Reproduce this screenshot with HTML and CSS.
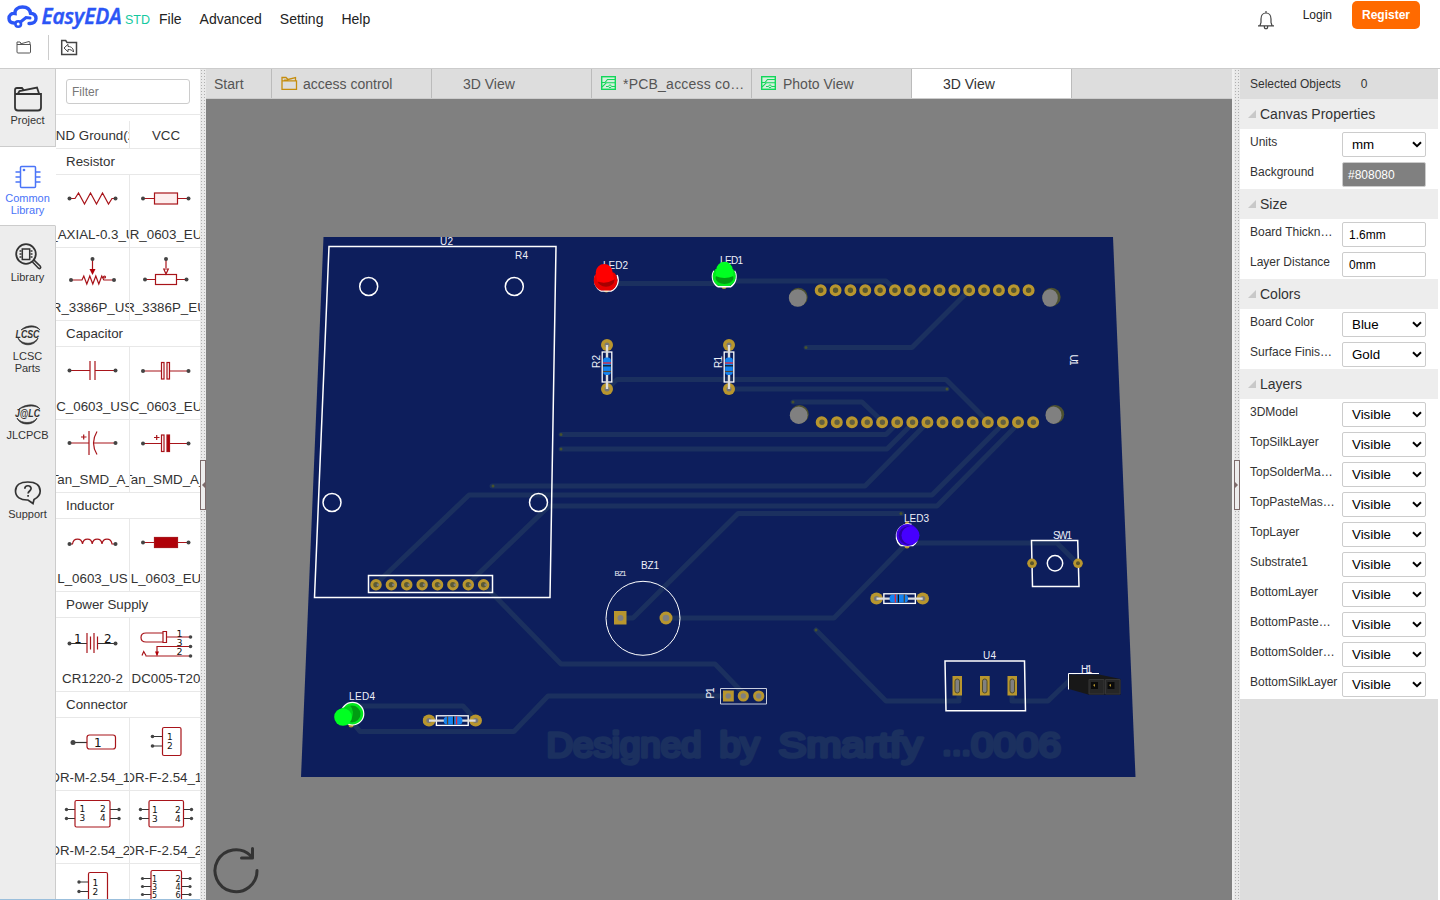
FILE: index.html
```html
<!DOCTYPE html>
<html lang="en">
<head>
<meta charset="utf-8">
<title>EasyEDA - 3D View</title>
<link rel="stylesheet" href="styles.css">
</head>
<body>
<svg class="defs" width="0" height="0" aria-hidden="true">
  <symbol id="chev" viewBox="0 0 10 7"><path d="M1 1.200l4 4 4-4" fill="none" stroke="#000" stroke-width="2"/></symbol>
  <symbol id="pcb" viewBox="0 0 15 14"><rect x=".7" y=".7" width="13.600" height="12.600" fill="#d3f0dc" stroke="#12d65a" stroke-width="1.400"/><path d="M1 6.500h3l2.500-3H14M1 11l4.500-4.300H14M5 10.500h2.500M10.500 10.500H14" fill="none" stroke="#12d65a" stroke-width="1.100"/><circle cx="9" cy="10.300" r="1.300" fill="#fff" stroke="#12d65a"/></symbol>
  <symbol id="resv" viewBox="-8 -28 16 56">
    <circle cy="-22" r="6" fill="#b8962e"/><circle cy="22" r="6" fill="#b8962e"/><circle cy="-22" r="2.500" fill="#777"/><circle cy="22" r="2.500" fill="#777"/>
    <rect x="-4.800" y="-15" width="9.600" height="30" fill="none" stroke="#fff" stroke-width="1.300"/>
    <path d="M0-22V22" stroke="#ddd" stroke-width="2.400"/>
    <rect x="-3.800" y="-9.500" width="7.600" height="17.500" rx="3" fill="#1583f0"/>
    <path d="M-4-4h8" stroke="#e5263a" stroke-width="1.300"/><path d="M-4-1.200h8" stroke="#111" stroke-width="1.200"/><path d="M-4 4.500h8" stroke="#543" stroke-width="1.200"/>
  </symbol>
</svg>
<div class="app">
  <header class="top">
    <div class="menubar">
      <svg class="logo" width="125" height="30" viewBox="0 0 125 30">
        <path d="M14.500 23c-3.500 0-5-2-5-4.500 0-3.500 2.500-5.500 6-5C15 9.500 18.500 7 23 7c4.500 0 7.500 2.500 8 6.200 3.500.3 5.500 2.300 5.500 5.300 0 3.200-2.500 5-6 5h-1" fill="none" stroke="#2b55f6" stroke-width="3.400" stroke-linecap="round" transform="translate(-.5 0)"/>
        <circle cx="18.200" cy="24" r="2.800" fill="none" stroke="#2b55f6" stroke-width="2.600"/><path d="M20.500 22l5.500-4.500 4 .5" fill="none" stroke="#2b55f6" stroke-width="3" stroke-linecap="round"/>
        <text class="logo-name" x="41.500" y="24" textLength="80" lengthAdjust="spacingAndGlyphs">EasyEDA</text>
      </svg>
      <span class="std">STD</span>
      <nav class="menu"><span>File</span><span>Advanced</span><span>Setting</span><span>Help</span></nav>
      <div class="account">
        <svg class="bell" width="18" height="20" viewBox="0 0 18 20" fill="none" stroke="#444" stroke-width="1.200"><path d="M9 1v2M1 15.800h16M3 15.500l1-3V9c0-3.500 2-6 5-6s5 2.500 5 6v3.500l1 3M7.300 16.500c0 3 3.400 3 3.400 0"/></svg>
        <span class="login">Login</span><span class="register">Register</span>
      </div>
    </div>
    <div class="toolbar">
      <svg width="16" height="14" viewBox="0 0 16 14" fill="none" stroke="#555"><path d="M1 4.500h13.500v7.500q0 1-1 1h-11.500q-1 0-1-1V2h3l1 1.200M4 4l9-2.500 1 .7v2"/></svg>
      <i class="sep"></i>
      <svg width="18" height="17" viewBox="0 0 18 17" fill="none" stroke="#444"><path stroke-width="1.500" d="M1.700 15.500V1.500h4l1.300 2h9.500v12z"/><path d="M4 9l4-3.700v2.200c4 0 5.500 2.500 5.500 5.500-1.500-2-3-2.500-5.500-2.500v2.300z"/></svg>
    </div>
  </header>
  <div class="body">
    <aside class="rail">
      <div class="rail-item"><svg width="28" height="26" viewBox="0 0 28 26" fill="none" stroke="#333" stroke-width="1.800"><path d="M1 8h26v13.500q0 3-3 3H4q-3 0-3-3V4q0-2 2-2h5l2 2.500M4 7.500l1.500-2.500L23 1.500l2 6"/></svg><span>Project</span></div>
      <div class="rail-item active"><svg width="28" height="26" viewBox="0 0 28 26" fill="none" stroke="#4a74f8" stroke-width="1.500"><rect x="6.500" y="2.500" width="15" height="21" rx="1"/><path d="M1.500 8h5M1.500 13h5M1.500 18h5M21.500 8h5M21.500 13h5M21.500 18h5"/><circle cx="10" cy="6" r=".6"/></svg><span>Common Library</span></div>
      <div class="rail-item"><svg width="28" height="28" viewBox="0 0 28 28" fill="none" stroke="#333"><circle cx="12" cy="12" r="9.800" stroke-width="1.800"/><rect x="8.300" y="7" width="7.400" height="10.500" stroke-width="1.500"/><path stroke-width="1.300" d="M5.500 9h2M5.500 12h2M5.500 15h2M16.500 9h2M16.500 12h2M16.500 15h2"/><path stroke-width="1.600" d="M18.500 20l6 6.200q1 .8 1.800 0t0-2l-6.300-6"/></svg><span>Library</span></div>
      <div class="rail-item"><svg width="28" height="22" viewBox="0 0 28 22"><path d="M7 6C12 1 22 0 26 6c-4-4-11-4-19 0zM4 14c4 7 16 7 20 0-3 9-17 9-20 0z" fill="#333" stroke="#333" stroke-width=".7"/><text class="brand" x="1.500" y="14" textLength="24" lengthAdjust="spacingAndGlyphs">LCSC</text></svg><span>LCSC Parts</span></div>
      <div class="rail-item"><svg width="28" height="22" viewBox="0 0 28 22"><path d="M5 6C11 1 22 0 26 6c-4-4-12-4-21 0zM3 15c4 6 16 6 20 0-3 8-17 8-20 0z" fill="#333" stroke="#333" stroke-width=".7"/><text class="brand" x="1" y="14" textLength="25" lengthAdjust="spacingAndGlyphs">J@LC</text></svg><span>JLCPCB</span></div>
      <div class="rail-item"><svg width="28" height="26" viewBox="0 0 28 26" fill="none" stroke="#333" stroke-width="1.700"><path d="M20 19.500c4-2 6.200-5 6.200-8.500C26 5 21 2 13.800 2S1.500 5 1.500 11s5 9.300 12.500 9l5 3.500z"/><path d="M10.800 8.800c0-4 6.300-4 6.300-.2 0 2.400-3 2.400-3 5M14.100 15v1.800"/></svg><span>Support</span></div>
    </aside>
    <section class="lib">
      <div class="filter"><input placeholder="Filter"></div>
      <div class="parts">
        <div class="pair first"><div class="part"><span>GND Ground(2)</span></div><div class="part"><span>VCC</span></div></div>
        <h3>Resistor</h3>
        <div class="pair">
          <div class="part"><svg class="ic" viewBox="0 0 73 46"><path class="r" d="M14 23.500h5l3.500-5.500 6 11 6-11 6 11 6-11 6 11 3.500-5.500h4"/><g class="dot"><circle cx="13.500" cy="23.500" r="2"/><circle cx="59.500" cy="23.500" r="2"/></g></svg><span>R_AXIAL-0.3_US</span></div>
          <div class="part"><svg class="ic" viewBox="0 0 73 46"><path class="r" d="M13 23.500h11.500M48 23.500h11"/><rect class="r pale" x="24.500" y="18" width="23" height="11"/><g class="dot"><circle cx="13" cy="23.500" r="2"/><circle cx="58.500" cy="23.500" r="2"/></g></svg><span>R_0603_EU</span></div>
        </div>
        <div class="pair">
          <div class="part"><svg class="ic" viewBox="0 0 73 46"><path class="r" d="M15 32h11l1.800-4 3 8 3-8 3 8 3-8 3 8 3-8 2 4h10M36.500 11v12"/><path class="rf" d="M33.500 21h6l-3 6z"/><circle class="r" cx="48.500" cy="29" r="1"/><g class="dot"><circle cx="15" cy="32" r="2"/><circle cx="58" cy="32" r="2"/><circle cx="36.500" cy="11" r="2"/></g></svg><span>R_3386P_US</span></div>
          <div class="part"><svg class="ic" viewBox="0 0 73 46"><path class="r" d="M15 31.500h11M47 31.500h10M36 11v9"/><rect class="r" x="25.500" y="26.500" width="21" height="10"/><path class="r" d="M33.800 21h4.500L36 26z"/><g class="dot"><circle cx="15" cy="31.500" r="2"/><circle cx="56.500" cy="31.500" r="2"/><circle cx="36" cy="11" r="2"/></g></svg><span>R_3386P_EU</span></div>
        </div>
        <h3>Capacitor</h3>
        <div class="pair">
          <div class="part"><svg class="ic" viewBox="0 0 73 46"><path class="r" d="M14 23.500h20M39 23.500h20M34 14v19M39 14v19"/><g class="dot"><circle cx="13.500" cy="23.500" r="2"/><circle cx="59.500" cy="23.500" r="2"/></g></svg><span>C_0603_US</span></div>
          <div class="part"><svg class="ic" viewBox="0 0 73 46"><path class="r" d="M13 24h18M40 24h18"/><rect class="r" x="31.500" y="15.500" width="2.500" height="16.500"/><rect class="r pale" x="37" y="15.500" width="2.500" height="16.500"/><g class="dot"><circle cx="13" cy="24" r="2"/><circle cx="58.500" cy="24" r="2"/></g></svg><span>C_0603_EU</span></div>
        </div>
        <div class="pair">
          <div class="part"><svg class="ic" viewBox="0 0 73 46"><path class="r" d="M14 23h19M38 23h21M33 11v24M41 11.500q-7 11.500 0 23M25 17h5.500M27.700 14.500v5"/><g class="dot"><circle cx="13.500" cy="23" r="2"/><circle cx="59.500" cy="23" r="2"/></g></svg><span>C_Tan_SMD_A_US</span></div>
          <div class="part"><svg class="ic" viewBox="0 0 73 46"><path class="r" d="M13 23.500h18M40 23.500h18M24 17.500h5.500M26.700 15v5"/><rect class="r" x="31.500" y="15" width="2.500" height="16.500"/><rect class="r rf" x="37" y="15" width="2.500" height="16.500"/><g class="dot"><circle cx="13" cy="23.500" r="2"/><circle cx="58.500" cy="23.500" r="2"/></g></svg><span>C_Tan_SMD_A_EU</span></div>
        </div>
        <h3>Inductor</h3>
        <div class="pair">
          <div class="part"><svg class="ic" viewBox="0 0 73 46"><path class="r" d="M13.500 25h3c1-6.500 9-6.500 10 0 1-6.500 9-6.500 9.700 0 1-6.500 9-6.500 9.800 0 1-6.500 9-6.500 10 0h3"/><g class="dot"><circle cx="13.500" cy="25" r="2"/><circle cx="59.500" cy="25" r="2"/></g></svg><span>L_0603_US</span></div>
          <div class="part"><svg class="ic" viewBox="0 0 73 46"><path class="r" d="M13 23.500h45"/><rect class="r rf" x="24.500" y="18.500" width="23" height="10"/><g class="dot"><circle cx="13" cy="23.500" r="2"/><circle cx="58.500" cy="23.500" r="2"/></g></svg><span>L_0603_EU</span></div>
        </div>
        <h3>Power Supply</h3>
        <div class="pair tall">
          <div class="part"><svg class="ic" viewBox="0 0 73 46"><path class="k" d="M14 25.500h17M42 25.500h17"/><path class="r" d="M31 15v20M34.500 18.500v13M38 15v20M41.500 18.500v13"/><g class="dot"><circle cx="13.500" cy="25.500" r="2"/><circle cx="59.500" cy="25.500" r="2"/></g><text class="num" x="18" y="25">1</text><text class="num" x="48" y="25">2</text></svg><span>CR1220-2</span></div>
          <div class="part"><svg class="ic" viewBox="0 0 73 46"><path class="r" d="M33 15H16q-5 0-5 4.500t5 4.500h17M33 13.500h3.500v11H33zM37 19h23M60 28.500H27v8M15.500 38h44.500M12 37.500l1.700-4 2.300 4"/><path class="rf" d="M25 33.500h4l-2 5z"/><g class="dot"><circle cx="60.500" cy="19" r="1.800"/><circle cx="60.500" cy="28.500" r="1.800"/><circle cx="60.500" cy="38" r="1.800"/></g><text class="num sm" x="46.500" y="18.500">1</text><text class="num sm" x="46.500" y="28">3</text><text class="num sm" x="46.500" y="37.200">2</text></svg><span>DC005-T20</span></div>
        </div>
        <h3>Connector</h3>
        <div class="pair">
          <div class="part"><svg class="ic" viewBox="0 0 73 46"><path class="k" d="M17 24.500h14"/><rect class="r" x="31" y="17" width="28.500" height="14" rx="2.500"/><g class="dot"><circle cx="17" cy="24.500" r="2.500"/></g><text class="num" x="38" y="28.500">1</text></svg><span>HDR-M-2.54_1x1</span></div>
          <div class="part"><svg class="ic" viewBox="0 0 73 46"><path class="k" d="M23 18.500h9.500M23 28h9.500"/><rect class="r" x="32.500" y="9.500" width="18.500" height="28" rx="1.500"/><g class="dot"><circle cx="22.500" cy="18.500" r="1.800"/><circle cx="22.500" cy="28" r="1.800"/></g><text class="num xs" x="37" y="22">1</text><text class="num xs" x="37" y="31">2</text></svg><span>HDR-F-2.54_1x2</span></div>
        </div>
        <div class="pair">
          <div class="part"><svg class="ic" viewBox="0 0 73 46"><path class="k" d="M10 18.500h9M10 27.500h9M54 18.500h9M54 27.500h9"/><rect class="r" x="19" y="9.500" width="35" height="26.500" rx="1.500"/><g class="dot"><circle cx="10.500" cy="18.500" r="1.700"/><circle cx="10.500" cy="27.500" r="1.700"/><circle cx="63" cy="18.500" r="1.700"/><circle cx="63" cy="27.500" r="1.700"/></g><text class="num xs" x="23.500" y="21.300">1</text><text class="num xs" x="44" y="21.300">2</text><text class="num xs" x="23.500" y="30.300">3</text><text class="num xs" x="44" y="30.300">4</text></svg><span>HDR-M-2.54_2x2</span></div>
          <div class="part"><svg class="ic" viewBox="0 0 73 46"><path class="k" d="M10 18.500h9M10 27.500h9M54 18.500h8M54 27.500h8"/><rect class="r" x="19" y="9.500" width="34.500" height="26.500" rx="1.500"/><g class="dot"><circle cx="10.500" cy="18.500" r="1.700"/><circle cx="10.500" cy="27.500" r="1.700"/><circle cx="61.500" cy="18.500" r="1.700"/><circle cx="61.500" cy="27.500" r="1.700"/></g><text class="num xs" x="22" y="22">1</text><text class="num xs" x="45" y="22">2</text><text class="num xs" x="22" y="31">3</text><text class="num xs" x="45" y="31">4</text></svg><span>HDR-F-2.54_2x2</span></div>
        </div>
        <div class="pair">
          <div class="part"><svg class="ic" viewBox="0 0 73 46"><path class="k" d="M23 18h9.500M23 27.500h9.500"/><rect class="r" x="32.500" y="8.500" width="19" height="38" rx="1.500"/><g class="dot"><circle cx="23" cy="18" r="1.700"/><circle cx="23" cy="27.500" r="1.700"/></g><text class="num xs" x="36.500" y="22">1</text><text class="num xs" x="36.500" y="31">2</text></svg></div>
          <div class="part"><svg class="ic" viewBox="0 0 73 46"><path class="k" d="M12 14.500h9M12 22.500h9M12 30.500h9M51 14.500h9M51 22.500h9M51 30.500h9"/><rect class="r" x="21" y="6.500" width="30.500" height="34" rx="1.500"/><g class="dot"><circle cx="12.500" cy="14.500" r="1.600"/><circle cx="12.500" cy="22.500" r="1.600"/><circle cx="12.500" cy="30.500" r="1.600"/><circle cx="60" cy="14.500" r="1.600"/><circle cx="60" cy="22.500" r="1.600"/><circle cx="60" cy="30.500" r="1.600"/></g><text class="num xxs" x="22" y="17.500">1</text><text class="num xxs" x="45.500" y="17.500">2</text><text class="num xxs" x="22" y="25.500">3</text><text class="num xxs" x="45.500" y="25.500">4</text><text class="num xxs" x="22" y="33.500">5</text><text class="num xxs" x="45.500" y="33.500">6</text></svg></div>
        </div>
      </div>
    </section>
    <div class="split"><i class="grip left"></i></div>
    <main class="work">
      <div class="tabs">
        <div class="tab start">Start</div>
        <div class="tab"><svg width="17" height="15" viewBox="0 0 17 15" fill="none" stroke="#c58d0e" stroke-width="1.300"><path d="M1 4.800h14.500v8.500H1V1.500h4l1.500 1.500M3 4.500l11.500-3v3"/></svg>access control</div>
        <div class="tab">3D View</div>
        <div class="tab"><svg width="15" height="14"><use href="#pcb"/></svg><span class="wide">*PCB_access co…</span></div>
        <div class="tab"><svg width="15" height="14"><use href="#pcb"/></svg>Photo View</div>
        <div class="tab current">3D View</div>
      </div>
      <svg class="board" width="1026" height="801" viewBox="206 99 1026 801">
        <path d="M323.500 237H1113L1135.500 777H301z" fill="#0d1e5c"/>
        <g class="trace">
          <path d="M618 283.500h96M735 281h151l10 9M806 347.500h106l57-57M607 389l10-9.500h329l41 41M729 389h218M793 402h69l21 20M561 434.500h325l12-12M561 449h326l27-27M492 486h373l63-64M376 584l93-89h463l73-73M470 582l79-76h388l83-84M620 618h13L738 513.500h164M666 618h168l73-75M915 543h142l20 20M816 630l70 71h73v-12M1012 690v11h36l26-25M484 585l77 79h154l29 30M350 706h113l12 13M352 722l8 9.500h154L548 696h180"/>
        </g>
        <g fill="#45512f"><circle cx="806" cy="347.500" r="1.500"/><circle cx="947" cy="389" r="1.500"/><circle cx="793" cy="402" r="1.500"/><circle cx="561" cy="434.500" r="1.500"/><circle cx="561" cy="449" r="1.500"/><circle cx="493" cy="486" r="1.500"/><circle cx="816" cy="630" r="1.500"/><circle cx="901" cy="513.500" r="1.500"/></g>
        <g class="sign">
          <text x="546.500" y="757" textLength="155" lengthAdjust="spacingAndGlyphs">Designed</text>
          <text x="719.500" y="757" textLength="40" lengthAdjust="spacingAndGlyphs">by</text>
          <text x="778.500" y="757" textLength="144" lengthAdjust="spacingAndGlyphs">Smartfy</text>
          <text x="942" y="755" textLength="29">...</text>
          <text x="971" y="757" textLength="90" lengthAdjust="spacingAndGlyphs">0006</text>
        </g>

        <g class="silk">
          <path d="M329 246.500H556L550 597.500H314.500z"/>
          <circle cx="368.700" cy="286.500" r="9"/><circle cx="514.300" cy="286.500" r="9"/><circle cx="332" cy="502.500" r="9"/><circle cx="538.500" cy="502.500" r="9"/>
          <path d="M368.500 575.500h124v17h-124z"/>
          <circle cx="643" cy="618.300" r="37" stroke-width="1"/>
          <path d="M720.500 688.500h46v15.500h-46z" stroke-width="1" stroke="#c8cddd"/>
          <path d="M945 661h79.500l1 49.700H946z"/>
          <path d="M1031.500 540.500h46.200l1.300 46h-46.500z"/><circle cx="1055" cy="563.300" r="7.700"/>
        </g>
        <g fill="none" stroke-linecap="round">
          <path d="M376 584.800H484" stroke="#b8962e" stroke-width="11.500" stroke-dasharray="0 15.380"/><path d="M376 584.800H484.500" stroke="#5a5a35" stroke-width="5.400" stroke-dasharray="0 15.380"/><path d="M378 584.800H486" stroke="#80807a" stroke-width="2.800" stroke-dasharray="0 15.380"/>
          <path d="M820.700 290.200H1029" stroke="#b8962e" stroke-width="12" stroke-dasharray="0 14.850"/><path d="M820.700 290.200H1029" stroke="#55552f" stroke-width="5.400" stroke-dasharray="0 14.850"/>
          <path d="M821.700 422.300H1034" stroke="#b8962e" stroke-width="12" stroke-dasharray="0 15.100"/><path d="M822 422.300H1034" stroke="#625f40" stroke-width="5.400" stroke-dasharray="0 15.100"/>
        </g>
        <g fill="#4d5130"><circle cx="798.500" cy="297" r="9.200"/><circle cx="1051.500" cy="297" r="9.200"/><circle cx="799.500" cy="414.300" r="9.200"/><circle cx="1055" cy="414.300" r="9.200"/></g>
        <g fill="#808080"><ellipse cx="797.700" cy="298" rx="8.900" ry="8.700"/><ellipse cx="1050" cy="298" rx="7.800" ry="8.700"/><ellipse cx="798.700" cy="415.200" rx="8.900" ry="8.700"/><ellipse cx="1053.500" cy="415.200" rx="8" ry="8.700"/></g>
        <path d="M614 611h12.500v13.500H614zM723 690.500h10.800v11H723z" fill="#b8962e"/>
        <g fill="#b8962e"><circle cx="666" cy="618" r="6.500"/><circle cx="743.300" cy="696" r="5.600"/><circle cx="758.700" cy="696" r="5.600"/><circle cx="1032" cy="563.300" r="4.800"/><circle cx="1078" cy="563.300" r="4.800"/></g>
        <g fill="#808080"><circle cx="620.500" cy="618" r="3"/><circle cx="666" cy="618" r="3.300"/><circle cx="728.200" cy="696" r="2.700"/><circle cx="743.300" cy="696" r="2.700"/><circle cx="758.700" cy="696" r="2.700"/></g>
        <g fill="#5b562b"><circle cx="1032" cy="563.300" r="2"/><circle cx="1078" cy="563.300" r="2"/></g>
        <path d="M952.500 676H962v19.500h-9.500zM980 676h9.700v19.500H980zM1007.500 676h9.500v19.500h-9.500z" fill="#b8962e"/>
        <g fill="#808080" stroke="#504d2a"><rect x="955" y="679" width="4.500" height="14" rx="2.200"/><rect x="982.500" y="679" width="4.500" height="14" rx="2.200"/><rect x="1010" y="679" width="4.500" height="14" rx="2.200"/></g>

        <use href="#resv" x="599" y="339" width="16" height="56"/><use href="#resv" x="721" y="339" width="16" height="56"/>
        <g transform="translate(899.600 598.600) rotate(-90) scale(1 1.050)"><use href="#resv" x="-8" y="-28" width="16" height="56"/></g>
        <g transform="translate(452.300 720.600) rotate(90) scale(1 1.060)"><use href="#resv" x="-8" y="-28" width="16" height="56"/></g>

        <g class="des">
          <text x="440" y="245" textLength="13">U2</text><text x="515" y="259" textLength="13">R4</text>
          <text x="603" y="269" textLength="25">LED2</text><text x="720" y="264" textLength="23">LED1</text>
          <text x="349" y="700" textLength="26">LED4</text><text x="904" y="521.500" textLength="25">LED3</text>
          <text x="1053" y="539" textLength="19">SW1</text><text x="983" y="659" textLength="13">U4</text><text x="1081" y="673" textLength="11">H1</text>
          <text x="641" y="569" textLength="18">BZ1</text><text class="tiny" x="614.500" y="576" textLength="12">BZ1</text>
          <text transform="translate(600 368) rotate(-90)" textLength="13">R2</text><text transform="translate(722 368) rotate(-90)" textLength="12">R1</text>
          <text transform="translate(714 698.500) rotate(-90)" textLength="11">P1</text><text transform="translate(1069.500 354.500) rotate(90)" textLength="11">U1</text>
        </g>

        <circle cx="606.400" cy="290" r="2.500" fill="#b8962e"/><path d="M601 291h10a12 12 0 0 0 6-16M601 291a12 12 0 0 1-5.500-15" fill="none" stroke="#fff" stroke-width="1.500"/>
        <path d="M601 290.500h10a11 11 0 0 0 3-18l-18 1a11 11 0 0 0 5 17z" fill="#e60000"/><ellipse cx="606" cy="280" rx="8.500" ry="6.800" fill="#a60000"/><path d="M595.700 272.500a8.500 8.500 0 0 1 17 0l1.500 7q-8 5-17 2z" fill="#f00"/>
        <circle cx="724" cy="286.500" r="2.500" fill="#b8962e"/><path d="M718 286.800h12.500a12 12 0 0 0 4-16M718 286.800a12 12 0 0 1-4-16" fill="none" stroke="#fff" stroke-width="1.500"/>
        <path d="M718.500 286h11.500a11 11 0 0 0 3-17h-17.500a11 11 0 0 0 3 17z" fill="#00e81c"/><ellipse cx="724.500" cy="278" rx="9" ry="6" fill="#009c12"/><path d="M716.200 270a8.300 8.300 0 0 1 16.600 0l.7 6q-9 4-18 0z" fill="#00ff22"/>
        <circle cx="351" cy="725" r="2.500" fill="#b8962e"/><circle cx="352.500" cy="713.700" r="11.300" fill="#00e81c" stroke="#fff" stroke-width="1.200"/><circle cx="352" cy="714" r="8.500" fill="#009c12"/><path d="M341 708.500l9-3q5 5 1.500 14l-5.500 5z" fill="#00d01a"/><circle cx="343" cy="717" r="8.800" fill="#00ff22"/>
        <circle cx="907" cy="523.500" r="2" fill="#b8962e"/><circle cx="907" cy="546" r="2.500" fill="#b8962e"/><path d="M900.500 545.500h12.500a12 12 0 0 0 4-5M900.500 545.500a12.200 12.200 0 0 1 11-21" fill="none" stroke="#fff" stroke-width="1.500"/><circle cx="907.500" cy="535" r="11" fill="#3d00e8"/><circle cx="908" cy="535.500" r="9.300" fill="#2d00a6"/><circle cx="910.500" cy="535.300" r="9" fill="#4600ff"/>

        <path d="M1069 674.500h30l21.500 4.500v15.800H1089L1069 689z" fill="#181818"/><path d="M1068.500 689.500v-16H1099" fill="none" stroke="#fff"/>
        <path d="M1089 679.500h15v14.500h-15zM1105.500 679.500h14.500v14.500h-14.500z" fill="#262626" stroke="#363636"/><path d="M1091 682h7v7h-7zM1107.500 682h7v7h-7z" fill="#0a0a0a"/><path d="M1093 685l2-1v3zM1109 685l2-1v3z" fill="#b8962e"/>

        <path d="M257 870.500A21 21 0 1 1 250.500 855.500l2 2.500M252.500 848.500V858H241.500" fill="none" stroke="#333" stroke-width="3" stroke-linecap="round" stroke-linejoin="round"/>
      </svg>
    </main>
    <div class="split right"><i class="grip rgt"></i></div>
    <aside class="props">
      <div class="selected"><span>Selected Objects</span><b>0</b></div>
      <h4>Canvas Properties</h4>
      <div class="row"><label>Units</label><div class="sel">mm<svg><use href="#chev"/></svg></div></div>
      <div class="row"><label>Background</label><div class="inp dark">#808080</div></div>
      <h4>Size</h4>
      <div class="row"><label>Board Thickn…</label><div class="inp">1.6mm</div></div>
      <div class="row"><label>Layer Distance</label><div class="inp">0mm</div></div>
      <h4>Colors</h4>
      <div class="row"><label>Board Color</label><div class="sel">Blue<svg><use href="#chev"/></svg></div></div>
      <div class="row"><label>Surface Finis…</label><div class="sel">Gold<svg><use href="#chev"/></svg></div></div>
      <h4>Layers</h4>
      <div class="row"><label>3DModel</label><div class="sel">Visible<svg><use href="#chev"/></svg></div></div>
      <div class="row"><label>TopSilkLayer</label><div class="sel">Visible<svg><use href="#chev"/></svg></div></div>
      <div class="row"><label>TopSolderMa…</label><div class="sel">Visible<svg><use href="#chev"/></svg></div></div>
      <div class="row"><label>TopPasteMas…</label><div class="sel">Visible<svg><use href="#chev"/></svg></div></div>
      <div class="row"><label>TopLayer</label><div class="sel">Visible<svg><use href="#chev"/></svg></div></div>
      <div class="row"><label>Substrate1</label><div class="sel">Visible<svg><use href="#chev"/></svg></div></div>
      <div class="row"><label>BottomLayer</label><div class="sel">Visible<svg><use href="#chev"/></svg></div></div>
      <div class="row"><label>BottomPaste…</label><div class="sel">Visible<svg><use href="#chev"/></svg></div></div>
      <div class="row"><label>BottomSolder…</label><div class="sel">Visible<svg><use href="#chev"/></svg></div></div>
      <div class="row"><label>BottomSilkLayer</label><div class="sel">Visible<svg><use href="#chev"/></svg></div></div>
    </aside>
  </div>
</div>
</body>
</html>
```
FILE: styles.css
```css
* { box-sizing: border-box; }
body { margin: 0; background: #fff; color: #333; font: 14px "Liberation Sans", Arial, sans-serif; overflow: hidden; }
h3, h4 { margin: 0; font-weight: normal; }
.defs { display: block; position: absolute; }
.app { display: flex; flex-direction: column; width: 1440px; height: 900px; }

.top { height: 69px; border-bottom: 1px solid #ccc; }
.menubar { display: flex; height: 32px; align-items: flex-start; color: #222; }
.logo { flex: none; }
.logo-name { font: italic 600 21px "Open Sans", sans-serif; fill: #2b55f6; stroke: #2b55f6; stroke-width: .5; }
.std { width: 34px; padding-top: 12px; font-size: 12.5px; line-height: 16px; color: #14c9a0; }
.menu { display: flex; gap: 18px; padding-top: 11px; line-height: 16px; }
.account { display: flex; margin-left: auto; padding-right: 20px; font-size: 12px; }
.bell { margin: 10px 28px 0 0; }
.login { margin: 8px 20px 0 0; line-height: 14px; }
.register { height: 28px; width: 68px; margin-top: 1px; border-radius: 5px; background: #ff6a00; color: #fff; font-weight: bold; text-align: center; line-height: 28px; }
.toolbar { display: flex; align-items: center; height: 30px; padding-left: 16px; }
.sep { width: 1px; height: 25px; margin: 0 11px 0 16px; background: #ccc; }

.body { display: flex; flex: 1; min-height: 0; }
.rail { width: 56px; background: #ededed; border-bottom: 1px solid #9bbfdc; }
.rail-item { display: flex; flex-direction: column; align-items: center; height: 79px; border-right: 1px solid #ccc; font-size: 11px; line-height: 12px; text-align: center; }
.rail-item:first-child { height: 78px; border-bottom: 1px solid #ccc; }
.rail-item svg { flex: none; height: 44px; margin-top: 8px; margin-bottom: -7px; overflow: visible; }
.rail-item span { width: 50px; }
.rail-item:last-child { height: 436px; }
.rail-item.active { background: #fff; color: #4a74f8; border-right-color: #fff; border-bottom: 1px solid #ccc; }
.brand { font: italic bold 10px "Liberation Sans", sans-serif; fill: #333; }

.lib { width: 144px; background: #fff; overflow: hidden; border-bottom: 1px solid #9bbfdc; }
.filter { height: 46px; padding: 10px; border-bottom: 1px solid #e8e8e8; }
.filter input { width: 124px; height: 25px; padding: 0 5px; border: 1px solid #ccc; border-radius: 3px; font: 12px "Liberation Sans", sans-serif; }
.filter input::placeholder { color: #777; }
.parts { height: 784px; padding-top: 6px; overflow: hidden; font-size: 13.33px; }
.parts h3 { height: 26px; padding-left: 10px; border-bottom: 1px solid #e8e8e8; font-size: 13.33px; line-height: 25px; }
.pair { display: flex; height: 73px; border-bottom: 1px solid #e8e8e8; }
.pair.tall { height: 74px; }
.pair.tall span { margin-top: 7px; }
.pair.first { height: 28px; }
.part { display: flex; flex-direction: column; align-items: center; width: 74px; flex: none; border-right: 1px solid #e8e8e8; overflow: hidden; white-space: nowrap; }
.part + .part { width: 72px; border-right: 0; }
.part span { line-height: 16px; margin-top: 6px; }
.first .part span { margin-top: 7px; }
.ic { width: 73px; height: 46px; flex: none; }
.r { fill: none; stroke: #a8141a; stroke-width: 1.2; }
.pale { fill: #fdeeee; }
.rf { fill: #b00008; }
.k { stroke: #333; stroke-width: 1.2; }
.dot { fill: #444; }
.num { font: 12px "DejaVu Sans", sans-serif; fill: #111; }
.num.sm { font-size: 9.5px; }
.num.xs { font-size: 9px; }
.num.xxs { font-size: 8px; }

.split { position: relative; width: 6px; background: #e9e9e9 radial-gradient(circle at 1.5px 1.5px, #b0b0b0 .6px, transparent .9px) 0 0 / 3px 3px; }
.split.right { width: 8px; border-left: 2px solid #f0f0f0; }
.grip { position: absolute; left: 0; top: 391px; width: 6px; height: 50px; border: 1px solid #7c6a6a; background: #ededed; }
.grip::after { content: ""; position: absolute; top: 20px; border: 4px solid transparent; }
.grip.left::after { left: -3px; border-right-color: #7c6a6a; }
.grip.rgt::after { left: -1px; border-left-color: #7c6a6a; }

.work { width: 1026px; background: #808080; }
.tabs { display: flex; height: 30px; background: #ddd; border-bottom: 1px solid #ccc; color: #555; }
.tab { position: relative; width: 160px; padding-left: 31px; border-right: 1px solid #bbb; line-height: 30px; white-space: nowrap; }
.tab.start { width: 66px; padding-left: 8px; }
.tab svg { position: absolute; left: 9px; top: 7px; }
.tab .wide { letter-spacing: .22px; }
.tab.current { background: #fff; color: #333; }
.board { display: block; }
.trace { fill: none; stroke: #1b305f; stroke-width: 5; stroke-linejoin: round; stroke-linecap: round; }
.silk { fill: none; stroke: #fff; stroke-width: 1.5; }
.sign { font: 35px "Liberation Sans", sans-serif; fill: #1b305f; stroke: #1b305f; stroke-width: 3.5; stroke-linejoin: round; }
.des { font: 10px "Liberation Sans", sans-serif; fill: #eef0f8; }
.des .tiny { font-size: 7.5px; }

.props { width: 198px; background: #ddd; font-size: 12px; }
.selected { display: flex; height: 30px; padding-left: 10px; line-height: 30px; }
.selected b { margin-left: 20px; font-weight: normal; }
.props h4 { position: relative; height: 30px; padding-left: 20px; background: #ededed; font-size: 14px; line-height: 30px; }
.props h4::before { content: ""; position: absolute; left: 8px; top: 11px; border-left: 8px solid transparent; border-bottom: 8px solid #c8c8c8; }
.row { display: flex; height: 30px; padding-left: 10px; background: #fff; }
.row label { width: 92px; line-height: 26px; white-space: nowrap; }
.sel, .inp { position: relative; width: 84px; height: 25px; margin-top: 3px; border: 1px solid #ccc; border-radius: 2px; background: #fff; color: #000; }
.sel { padding-left: 9px; font-size: 13.33px; line-height: 24px; }
.sel svg { position: absolute; right: 3px; top: 8px; width: 10px; height: 7px; }
.inp { padding-left: 6px; line-height: 24px; }
.inp.dark { padding-left: 5px; background: #808080; color: #fff; }
```
